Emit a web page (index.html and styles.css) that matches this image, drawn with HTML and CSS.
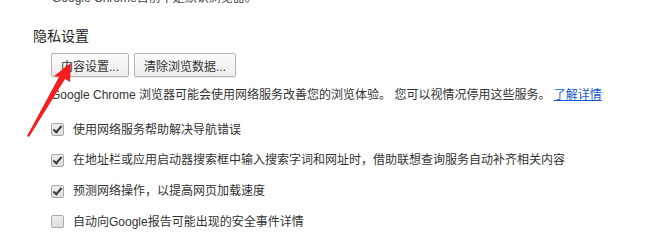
FILE: index.html
```html
<!DOCTYPE html>
<html lang="zh-CN">
<head>
<meta charset="utf-8">
<title>隐私设置</title>
<link rel="stylesheet" href="styles.css">
</head>
<body>
<div class="page">
  <div class="prev">Google Chrome目前不是默认浏览器。</div>
  <h3 class="section-title">隐私设置</h3>
  <div class="section-body">
    <div class="buttons">
      <button class="btn">内容设置...</button>
      <button class="btn">清除浏览数据...</button>
    </div>
    <p class="desc">Google Chrome 浏览器可能会使用网络服务改善您的浏览体验。 您可以视情况停用这些服务。 <a class="link" href="#">了解详情</a></p>
    <div class="checks">
      <label class="row"><span class="box checked"></span><span>使用网络服务帮助解决导航错误</span></label>
      <label class="row"><span class="box checked"></span><span>在地址栏或应用启动器搜索框中输入搜索字词和网址时，借助联想查询服务自动补齐相关内容</span></label>
      <label class="row"><span class="box checked"></span><span>预测网络操作，以提高网页加载速度</span></label>
      <label class="row"><span class="box"></span><span>自动向Google报告可能出现的安全事件详情</span></label>
    </div>
  </div>
  <svg class="arrow" width="80" height="160" viewBox="0 0 80 160" aria-hidden="true">
    <polygon points="71,73 70,92 65,89 29,147 27,146 59,87 54,86" fill="#f51d1d"/>
  </svg>
</div>
</body>
</html>
```

FILE: styles.css
```css
html, body {
  margin: 0;
  padding: 0;
  background: #ffffff;
}

body {
  width: 655px;
  height: 240px;
  overflow: hidden;
  font-family: "Liberation Sans", "Noto Sans CJK SC", sans-serif;
  font-size: 12px;
  color: #333333;
}

.page {
  position: relative;
  padding-left: 33px;
}

.prev {
  margin-top: -10px;
  padding-left: 19px;
  line-height: 16px;
  color: #444444;
}

.section-title {
  margin: 20px 0 0 0;
  font-size: 14px;
  font-weight: normal;
  line-height: 20px;
  color: #222222;
}

.section-body {
  padding-left: 18px;
}

.buttons {
  display: flex;
  gap: 5px;
  margin-top: 7px;
}

.btn {
  height: 24px;
  padding: 0;
  font-family: "Liberation Sans", "Noto Sans CJK SC", sans-serif;
  font-size: 12px;
  color: #333333;
  background: linear-gradient(#fbfbfb, #ededed);
  border: 1px solid #b4b4b4;
  border-radius: 2px;
  box-shadow: 0 1px 0 rgba(0, 0, 0, 0.06);
}

.btn:first-child {
  width: 78px;
}

.btn:last-child {
  width: 102px;
}

.desc {
  margin: 8.5px 0 0 0;
  line-height: 18px;
  color: #333333;
}

.link {
  color: #1558d6;
  text-decoration: underline;
}

.checks {
  margin-top: 11px;
}

.row {
  display: flex;
  align-items: center;
  gap: 9px;
  height: 30.67px;
  line-height: 18px;
}

.box {
  flex: none;
  position: relative;
  width: 11px;
  height: 11px;
  border: 1px solid #a9a9a9;
  border-radius: 2px;
  background: linear-gradient(#ededed, #dedede);
}

.box.checked::after {
  content: "";
  position: absolute;
  left: 3px;
  top: 0px;
  width: 3px;
  height: 7px;
  border-right: 2px solid #3a3a3a;
  border-bottom: 2px solid #3a3a3a;
  transform: rotate(40deg);
}

.arrow {
  position: absolute;
  left: 0;
  top: 0;
}
```
